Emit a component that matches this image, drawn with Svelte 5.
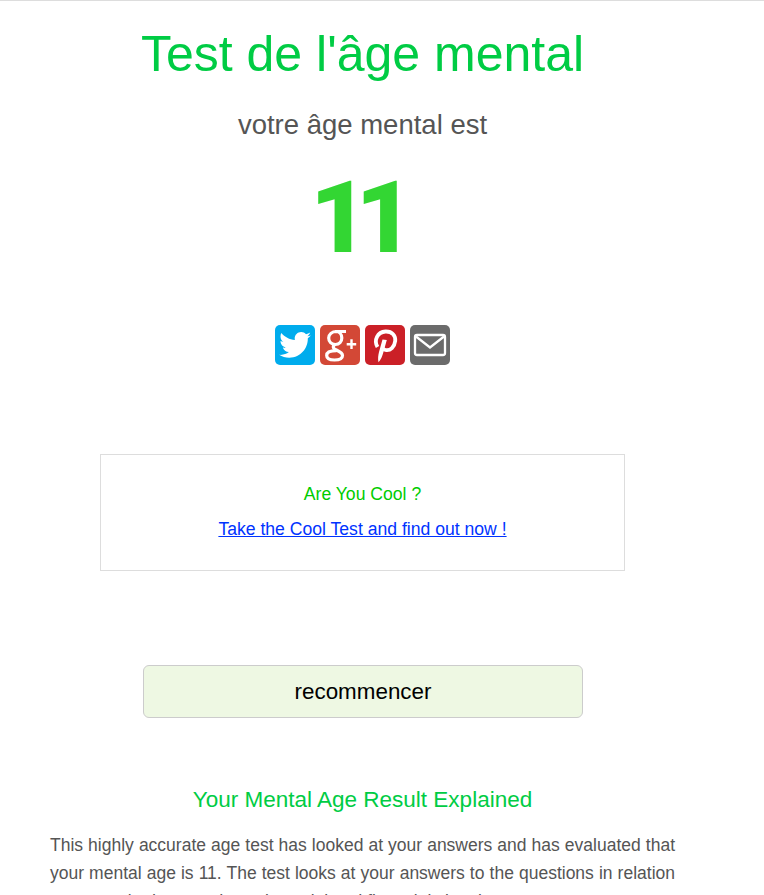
<script>
  const age = 11;

  const shares = [
    { name: 'Twitter', color: '#00aced' },
    { name: 'Google+', color: '#d34836' },
    { name: 'Pinterest', color: '#cb2027' },
    { name: 'Email', color: '#6b6b6b' }
  ];
</script>

<div class="page">
  <div class="content">
    <h1>Test de l'âge mental</h1>
    <p class="lead">votre âge mental est</p>
    <div class="age">{age}</div>

    <div class="shares">
      {#each shares as share}
        <a href="#top" class="share" style="background: {share.color}" aria-label={share.name}>
          <svg viewBox="0 0 40 40" width="40" height="40">
            {#if share.name === 'Twitter'}
              <path fill="#fff" d="M36 10.2c-1.2.5-2.4.9-3.7 1 1.3-.8 2.4-2.1 2.9-3.6-1.3.7-2.7 1.3-4.2 1.6C29.800 7.800 28.100 7 26.200 7c-3.600 0-6.500 2.900-6.500 6.500 0 .5.100 1 .2 1.500C14.400 14.700 9.600 12.100 6.400 8.100c-.6 1-.9 2.100-.9 3.300 0 2.300 1.200 4.300 2.900 5.400-1.100 0-2.100-.3-2.900-.8v.1c0 3.200 2.200 5.800 5.200 6.400-.5.100-1.100.2-1.700.2-.4 0-.8 0-1.200-.1.800 2.600 3.200 4.500 6.100 4.500-2.200 1.700-5 2.800-8.100 2.800-.5 0-1 0-1.600-.1 2.900 1.900 6.300 2.900 10 2.900 12 0 18.600-9.900 18.600-18.600v-.8c1.300-.9 2.400-2.100 3.200-3.400z" />
            {:else if share.name === 'Google+'}
              <g fill="none" stroke="#fff" stroke-width="3.200">
                <path d="M26 6.500h-9.500c-4.500 0-7.800 2.800-7.800 6.600 0 3.700 2.800 6.400 6.700 6.400 3.800 0 6.400-2.800 6.400-6.400 0-3.700-2.600-6.600-6.100-6.600" />
                <path d="M15 19.500c-2.300 1.100-2.500 3.700.3 5 3.600 1.700 7.200 3 7.200 6 0 3.200-3.600 4.500-8 4.500-4.700 0-7.800-1.700-7.800-4.500 0-3 3.600-4.800 9.800-4.800" />
              </g>
              <path fill="#fff" d="M30.300 14.300h2.400v3.700h3.500v2.400h-3.500v3.700h-2.400v-3.700h-3.600v-2.400h3.600z" />
            {:else if share.name === 'Pinterest'}
              <path fill="none" stroke="#fff" stroke-width="3.800" d="M12.500 22C8.500 15 12.500 7 20.500 6.500c6.800-.3 10.300 4.500 9.700 9.500-.7 5.800-4.800 10-9.700 9-1.300-.3-2.300-1-2.800-1.800" />
              <path fill="#fff" d="M17.500 14.500l4.300.5-3.500 12.500c-1 3.800-2.500 7.300-4.800 9.800-.8-3.400-.3-7 .5-10.300z" />
            {:else}
              <rect x="5" y="10" width="30" height="20" rx="2" fill="none" stroke="#fff" stroke-width="2.300" />
              <path fill="none" stroke="#fff" stroke-width="2.300" d="M6 11.500l14 11 14-11" />
            {/if}
          </svg>
        </a>
      {/each}
    </div>

    <div class="promo">
      <p class="promoTitle">Are You Cool ?</p>
      <a href="#top" class="promoLink">Take the Cool Test and find out now !</a>
    </div>

    <button class="restart">recommencer</button>

    <h2>Your Mental Age Result Explained</h2>
    <p class="body">
      This highly accurate age test has looked at your answers and has evaluated that
      your mental age is {age}. The test looks at your answers to the questions in relation
      to your attitude towards work, social and financial situations.
    </p>
  </div>
</div>

<style>
  :global(html), :global(body) {
    height: 895px;
    overflow: hidden;
  }

  .page {
    border-top: 1px solid #ddd;
    background: #fff;
  }

  .content {
    width: 725px;
    font-family: "Liberation Sans", Arial, sans-serif;
    text-align: center;
  }

  h1 {
    margin: 0;
    padding-top: 24px;
    font-size: 50px;
    line-height: 58px;
    font-weight: 400;
    color: #00cc44;
  }

  .lead {
    margin: 26px 0 0;
    font-size: 27.5px;
    line-height: 32px;
    color: #555;
  }

  .age {
    margin-top: 14px;
    padding-right: 14px;
    font-family: Roboto, "Liberation Sans", sans-serif;
    font-size: 101px;
    line-height: 126px;
    font-weight: 900;
    letter-spacing: -13px;
    color: #33d633;
  }

  .shares {
    display: flex;
    justify-content: center;
    gap: 5px;
    margin-top: 44px;
  }

  .share {
    display: block;
    width: 40px;
    height: 40px;
    border-radius: 5px;
  }

  .share svg {
    display: block;
  }

  .promo {
    box-sizing: border-box;
    width: 525px;
    height: 117px;
    margin: 89px 0 0 100px;
    padding-top: 29px;
    border: 1px solid #ddd;
    font-size: 17.6px;
  }

  .promoTitle {
    margin: 0 0 15px;
    line-height: 20px;
    color: #00cc00;
  }

  .promoLink {
    color: #0033ff;
    line-height: 20px;
  }

  .restart {
    display: block;
    box-sizing: border-box;
    width: 440px;
    height: 53px;
    margin: 94px 0 0 143px;
    border: 1px solid #ccc;
    border-radius: 6px;
    background: #eef8e3;
    font-family: inherit;
    font-size: 22.4px;
    color: #000;
  }

  h2 {
    margin: 68px 0 0;
    font-size: 22.5px;
    line-height: 28px;
    font-weight: 400;
    color: #00cc44;
  }

  .body {
    margin: 17px 0 0;
    padding: 0 50px;
    font-size: 17.5px;
    line-height: 28.2px;
    color: #555;
    text-align: justify;
  }
</style>
